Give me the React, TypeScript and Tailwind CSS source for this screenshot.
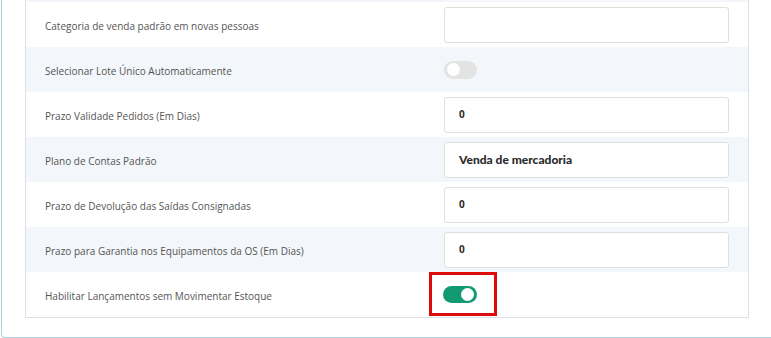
import React from "react";

type Row = {
  label: string;
  kind: "input" | "toggle";
  value?: string;
  big?: boolean;
  on?: boolean;
  highlight?: boolean;
};

const rows: Row[] = [
  { label: "Categoria de venda padrão em novas pessoas", kind: "input", value: "" },
  { label: "Selecionar Lote Único Automaticamente", kind: "toggle", on: false },
  { label: "Prazo Validade Pedidos (Em Dias)", kind: "input", value: "0" },
  { label: "Plano de Contas Padrão", kind: "input", value: "Venda de mercadoria", big: true },
  { label: "Prazo de Devolução das Saídas Consignadas", kind: "input", value: "0" },
  { label: "Prazo para Garantia nos Equipamentos da OS (Em Dias)", kind: "input", value: "0" },
  { label: "Habilitar Lançamentos sem Movimentar Estoque", kind: "toggle", on: true, highlight: true },
];

function Toggle({ on }: { on: boolean }) {
  return (
    <div
      className={
        on
          ? "w-[34px] h-[17px] rounded-full bg-[#129a72] flex items-center justify-end px-[3px]"
          : "w-[33px] h-[18px] rounded-full bg-[#e3e3e3] flex items-center justify-start px-[3px]"
      }
    >
      <div className="w-[13px] h-[13px] rounded-full bg-white" />
    </div>
  );
}

export default function App() {
  return (
    <div className="w-[771px] h-[338px] overflow-hidden bg-white" style={{ fontFamily: '"Open Sans", sans-serif' }}>
      <div className="ml-[1px] w-[790px] border-l border-b border-r border-[#a6d3de] rounded-b-[4px] pl-[23px] pr-[41px] pb-[19px]">
        <div className="w-[724px] border-l border-r border-b border-[#dcdfe3]">
          <div className="h-[2px] bg-[#f3f6fa]" />
          {rows.map((r, i) => (
            <div
              key={i}
              className={
                (i % 2 === 1 ? "bg-[#f3f6fa] " : "bg-white ") +
                "h-[45px] flex items-center"
              }
            >
              <div className="w-[418px] pl-[19px] pt-[3px] text-[10px] text-[#555]">{r.label}</div>
              {r.kind === "input" ? (
                <div className="w-[285px] h-[36px] bg-white border border-[#dedede] rounded-[3px] flex items-center pl-[14px] text-[#2b2b2b]">
                  {r.value ? (
                    <span
                      className={r.big ? "text-[12px] font-bold" : "text-[10px] font-bold"}
                      style={r.big ? { fontFamily: "Lato, sans-serif", fontWeight: 900 } : undefined}
                    >
                      {r.value}
                    </span>
                  ) : null}
                </div>
              ) : r.highlight ? (
                <div className="-ml-[15px] -mt-[1px] w-[68px] h-[44px] border-[3px] border-[#df0b0b] flex items-center pl-[11px]">
                  <Toggle on={!!r.on} />
                </div>
              ) : (
                <Toggle on={!!r.on} />
              )}
            </div>
          ))}
        </div>
      </div>
    </div>
  );
}
